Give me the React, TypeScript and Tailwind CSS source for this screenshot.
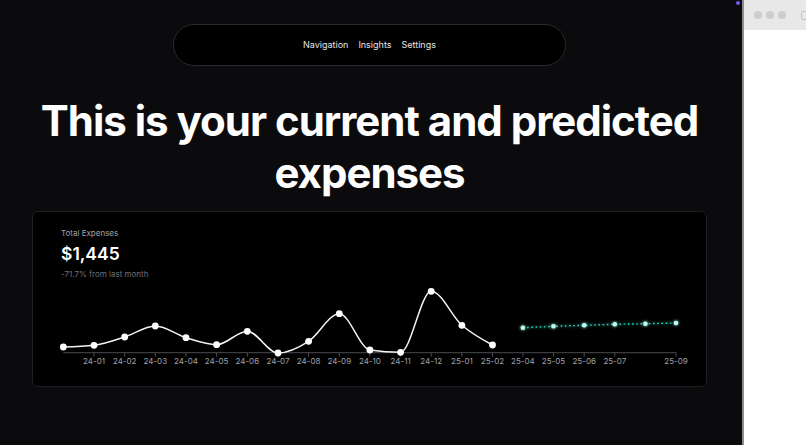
import React from 'react';

type Pt = { x: number; y: number };

// page coords -> svg coords (svg sits at card inner left / top offset)
const OX = 33;
const OY = 286;

const actual: { label: string; x: number; y: number }[] = [
  { label: '', x: 63.3, y: 346 },
  { label: '24-01', x: 94, y: 344.3 },
  { label: '24-02', x: 124.7, y: 336 },
  { label: '24-03', x: 155.3, y: 325 },
  { label: '24-04', x: 186, y: 336.7 },
  { label: '24-05', x: 216.6, y: 343.7 },
  { label: '24-06', x: 247.3, y: 330.3 },
  { label: '24-07', x: 278, y: 352 },
  { label: '24-08', x: 308.6, y: 340.3 },
  { label: '24-09', x: 339.3, y: 312.7 },
  { label: '24-10', x: 369.9, y: 349 },
  { label: '24-11', x: 400.6, y: 351.3 },
  { label: '24-12', x: 431.2, y: 290.3 },
  { label: '25-01', x: 461.9, y: 324.3 },
  { label: '25-02', x: 492.5, y: 344 },
];

const predicted: { label: string; x: number; y: number }[] = [
  { label: '25-04', x: 522.9, y: 326.7 },
  { label: '25-05', x: 553.5, y: 325.3 },
  { label: '25-06', x: 584.2, y: 324.3 },
  { label: '25-07', x: 614.8, y: 323.3 },
  { label: '', x: 645.4, y: 322.7 },
  { label: '25-09', x: 676, y: 322 },
];

const sign = (v: number) => (v < 0 ? -1 : 1);

// same maths as d3 curveMonotoneX
function monotonePath(pts: Pt[]) {
  const n = pts.length;
  const t: number[] = new Array(n).fill(0);
  for (let i = 1; i < n - 1; i++) {
    const h0 = pts[i].x - pts[i - 1].x;
    const h1 = pts[i + 1].x - pts[i].x;
    const s0 = (pts[i].y - pts[i - 1].y) / h0;
    const s1 = (pts[i + 1].y - pts[i].y) / h1;
    const p = (s0 * h1 + s1 * h0) / (h0 + h1);
    t[i] = (sign(s0) + sign(s1)) * Math.min(Math.abs(s0), Math.abs(s1), 0.5 * Math.abs(p)) || 0;
  }
  const hA = pts[1].x - pts[0].x;
  t[0] = (3 * (pts[1].y - pts[0].y) / hA - t[1]) / 2;
  const hB = pts[n - 1].x - pts[n - 2].x;
  t[n - 1] = (3 * (pts[n - 1].y - pts[n - 2].y) / hB - t[n - 2]) / 2;

  let d = `M${pts[0].x},${pts[0].y}`;
  for (let i = 0; i < n - 1; i++) {
    const dx = (pts[i + 1].x - pts[i].x) / 3;
    d += ` C${pts[i].x + dx},${pts[i].y + dx * t[i]} ${pts[i + 1].x - dx},${pts[i + 1].y - dx * t[i + 1]} ${pts[i + 1].x},${pts[i + 1].y}`;
  }
  return d;
}

function ExpenseChart() {
  const a = actual.map((p) => ({ x: p.x - OX, y: p.y - OY }));
  const f = predicted.map((p) => ({ x: p.x - OX, y: p.y - OY }));
  const axisY = 351.7 - OY;
  const ticks = [...actual, ...predicted].filter((p) => p.label !== '');

  return (
    <svg width={673} height={86} viewBox="0 0 673 86" className="block">
      <defs>
        <filter id="glow" x="-50%" y="-50%" width="200%" height="200%">
          <feGaussianBlur stdDeviation="1.4" result="b" />
          <feMerge>
            <feMergeNode in="b" />
            <feMergeNode in="SourceGraphic" />
          </feMerge>
        </filter>
      </defs>

      {/* axis */}
      <line x1={63.3 - OX} x2={676 - OX} y1={axisY} y2={axisY} stroke="#4b4b4f" strokeWidth={1} />
      {ticks.map((p) => (
        <g key={p.label}>
          <line x1={p.x - OX} x2={p.x - OX} y1={axisY} y2={axisY + 4} stroke="#4b4b4f" strokeWidth={1} />
          <text
            x={p.x - OX}
            y={axisY + 11}
            textAnchor="middle"
            fill="#a1a1aa"
            fontSize={8}
            fontFamily="Inter, 'Liberation Sans', sans-serif"
          >
            {p.label}
          </text>
        </g>
      ))}

      {/* actual expenses */}
      <path d={monotonePath(a)} fill="none" stroke="#f4f4f5" strokeWidth={1.5} />
      {a.map((p, i) => (
        <circle key={i} cx={p.x} cy={p.y} r={3.4} fill="#ffffff" />
      ))}

      {/* predicted */}
      <g filter="url(#glow)">
        <polyline
          points={f.map((p) => `${p.x},${p.y}`).join(' ')}
          fill="none"
          stroke="#2dd4bf"
          strokeWidth={1.4}
          strokeDasharray="1.6 2.6"
        />
        {f.map((p, i) => (
          <circle key={i} cx={p.x} cy={p.y} r={2.3} fill="#b4fff4" />
        ))}
      </g>
    </svg>
  );
}

export default function App() {
  return (
    <div
      className="relative flex h-[445px] w-[806px] overflow-hidden bg-[#0b0b0d]"
      style={{ fontFamily: "Inter, 'Liberation Sans', sans-serif" }}
    >
      {/* main page */}
      <div className="flex w-[742px] shrink-0 flex-col items-center pr-[3px] pt-[24px]">
        <nav className="flex h-[42px] w-[393px] items-center justify-center gap-[10px] rounded-full border border-[#2a2a2d] bg-black text-[9px] text-[#e4e4e7]">
          <span>Navigation</span>
          <span>Insights</span>
          <span>Settings</span>
        </nav>

        <h1 className="mt-[29px] text-center text-[42px] font-bold leading-[52px] tracking-[-0.024em] text-white">
          This is your current and predicted
          <br />
          expenses
        </h1>

        <div className="mt-[12px] flex h-[176px] w-[675px] flex-col rounded-[6px] border border-[#1f1f23] bg-black">
          <div className="px-[28px] pt-[15px]">
            <p className="text-[8px] leading-[12px] text-[#a1a1aa]">Total Expenses</p>
            <p className="mt-[3px] text-[17.5px] font-semibold leading-[24px] text-white">$1,445</p>
            <p className="mt-[2px] text-[8px] leading-[12px] text-[#71717a]">-71.7% from last month</p>
          </div>
          <div className="mt-[7px]">
            <ExpenseChart />
          </div>
        </div>
      </div>

      {/* side window */}
      <div className="w-[2px] shrink-0 bg-[#8c8c8c]" />
      <div className="flex min-w-0 flex-1 flex-col overflow-hidden bg-white">
        <div className="flex h-[30px] shrink-0 items-center gap-[4px] bg-[#e8e8e8] pl-[10px]">
          <span className="h-[8px] w-[8px] shrink-0 rounded-full bg-[#cdcdcd]" />
          <span className="h-[8px] w-[8px] shrink-0 rounded-full bg-[#cdcdcd]" />
          <span className="h-[8px] w-[8px] shrink-0 rounded-full bg-[#cdcdcd]" />
          <span className="ml-[11px] h-[9px] w-[10px] shrink-0 rounded-[2px] border border-[#c4c4c4]" />
        </div>
      </div>

      <span className="absolute left-[736px] top-[1px] h-[4px] w-[4px] rounded-full bg-[#6f5cf6]" />
    </div>
  );
}
